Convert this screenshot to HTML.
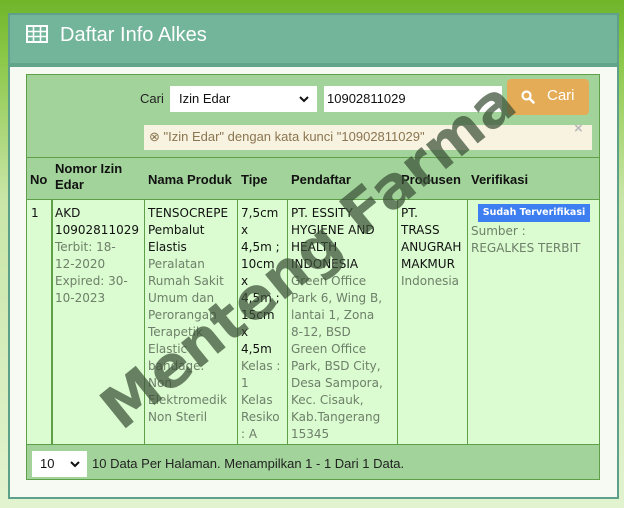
<!DOCTYPE html>
<html><head><meta charset="utf-8"><style>
*{margin:0;padding:0;box-sizing:border-box}
body{width:624px;height:508px;overflow:hidden;position:relative;font-family:"Liberation Sans",sans-serif;
background:linear-gradient(180deg,#6fb52a 0px,#8cc84a 60px,#c9e6a8 200px,#e2f3d0 508px);}
.a{position:absolute}
.panel{left:8px;top:13px;width:611px;height:486px;border:2px solid #5fa08a;background:#f6faf2}
.hdr{left:0;top:0;width:607px;height:52px;background:#72b59b;border-bottom:4px solid #62a58a}
.tbl{left:26px;top:74px;width:574px;height:406px;border:1px solid #5f9f48;background:#a2d39a}
.d{font-family:"DejaVu Sans",Verdana,sans-serif;font-size:12px;line-height:17px;color:#111}
.g{color:#6e7f6a}
.vl{position:absolute;top:124px;height:246px;border-left:1px solid #5f9f48}
</style></head><body>
<div class="a panel">
 <div class="a hdr">
  <svg class="a" style="left:16px;top:10px" width="22" height="18" viewBox="0 0 22 18"><rect x="1" y="1" width="20" height="16" fill="none" stroke="#fff" stroke-width="2"/><path d="M1 6.5H21M1 11.5H21M7.5 1V17M14.5 1V17" stroke="#fff" stroke-width="1.6"/></svg>
  <div class="a" style="left:50px;top:9px;font-size:20px;color:#fff">Daftar Info Alkes</div>
 </div>
</div>
<div class="a tbl">
 <div class="a" style="left:113px;top:16px;font-size:13px;color:#222">Cari</div>
 <div class="a" style="left:143px;top:11px;width:147px;height:26px;background:#fff;font-size:13px;padding:5px 9px;color:#111">Izin Edar<svg style="position:absolute;right:8px;top:10px" width="10" height="7" viewBox="0 0 10 7"><path d="M1 1L5 5L9 1" fill="none" stroke="#111" stroke-width="2"/></svg></div>
 <div class="a" style="left:297px;top:11px;width:178px;height:26px;background:#fff;font-size:13px;padding:5px 3px;color:#111">10902811029</div>
 <div class="a" style="left:480px;top:4px;width:82px;height:36px;background:#e4ac56;border-radius:4px;color:#fff;font-size:15px;padding:8px 0 0 40px">Cari<svg style="position:absolute;left:14px;top:11px" width="14" height="14" viewBox="0 0 14 14"><circle cx="5.5" cy="5.5" r="4" fill="none" stroke="#fff" stroke-width="2.2"/><path d="M8.5 8.5L12.5 12.5" stroke="#fff" stroke-width="2.6" stroke-linecap="round"/></svg></div>
 <div class="a" style="left:117px;top:50px;width:448px;height:25px;background:#f8f2e0;font-size:13px;color:#8a7650;padding:4px 5px">&#8855; "Izin Edar" dengan kata kunci "10902811029"</div>
 <div class="a" style="left:547px;top:45px;color:#bbb;font-size:15px;font-weight:bold">×</div>
 <div class="a" style="left:0;top:82px;width:572px;border-top:1px solid #5f9f48"></div>
 <div class="a" style="left:0;top:124px;width:572px;height:246px;background:#dafcd0;border-top:1px solid #5f9f48;border-bottom:1px solid #5f9f48"></div>
 <div class="a" style="left:24px;top:124px;height:246px;border-left:2px solid #5f9f48"></div>
 <div class="vl" style="left:117px"></div><div class="vl" style="left:210px"></div><div class="vl" style="left:260px"></div><div class="vl" style="left:370px"></div><div class="vl" style="left:440px"></div>
 <div class="a" style="font-size:13px;font-weight:bold;color:#111;top:86px;left:3px;line-height:16px">
  <div class="a" style="left:0;top:11px">No</div>
  <div class="a" style="left:25px;top:0;width:90px">Nomor Izin Edar</div>
  <div class="a" style="left:118px;top:11px;white-space:nowrap">Nama Produk</div>
  <div class="a" style="left:211px;top:11px">Tipe</div>
  <div class="a" style="left:261px;top:11px">Pendaftar</div>
  <div class="a" style="left:371px;top:11px">Produsen</div>
  <div class="a" style="left:441px;top:11px">Verifikasi</div>
 </div>
 <div class="a d" style="left:4px;top:130px">1</div>
 <div class="a d" style="left:28px;top:130px;width:90px">AKD<br>10902811029<br><span class="g">Terbit: 18-<br>12-2020<br>Expired: 30-<br>10-2023</span></div>
 <div class="a d" style="left:121px;top:130px;width:92px">TENSOCREPE<br>Pembalut<br>Elastis<br><span class="g">Peralatan<br>Rumah Sakit<br>Umum dan<br>Perorangan<br>Terapetik<br>Elastic<br>bandage.<br>Non<br>Elektromedik<br>Non Steril</span></div>
 <div class="a d" style="left:214px;top:130px;width:48px">7,5cm<br>x<br>4,5m ;<br>10cm<br>x<br>4,5m ;<br>15cm<br>x<br>4,5m<br><span class="g">Kelas :<br>1<br>Kelas<br>Resiko<br>: A</span></div>
 <div class="a d" style="left:264px;top:130px;width:108px">PT. ESSITY<br>HYGIENE AND<br>HEALTH<br>INDONESIA<br><span class="g">Green Office<br>Park 6, Wing B,<br>lantai 1, Zona<br>8-12, BSD<br>Green Office<br>Park, BSD City,<br>Desa Sampora,<br>Kec. Cisauk,<br>Kab.Tangerang<br>15345</span></div>
 <div class="a d" style="left:374px;top:130px;width:68px">PT.<br>TRASS<br>ANUGRAH<br>MAKMUR<br><span class="g">Indonesia</span></div>
 <div class="a" style="left:451px;top:129px;width:112px;height:18px;background:#3d7ef0;color:#fff;font-family:'DejaVu Sans',sans-serif;font-size:9.5px;font-weight:bold;text-align:center;line-height:18px">Sudah Terverifikasi</div>
 <div class="a d g" style="left:444px;top:148px">Sumber :<br>REGALKES TERBIT</div>
 <div class="a" style="left:5px;top:376px;width:55px;height:26px;background:#fff;font-size:13px;padding:5px 8px;color:#111">10<svg style="position:absolute;right:7px;top:10px" width="10" height="7" viewBox="0 0 10 7"><path d="M1 1L5 5L9 1" fill="none" stroke="#111" stroke-width="2"/></svg></div>
 <div class="a" style="left:65px;top:381px;font-size:13px;color:#222">10 Data Per Halaman. Menampilkan 1 - 1 Dari 1 Data.</div>
</div>
<div class="a" style="left:18px;top:225px;width:580px;text-align:center;transform:rotate(-39deg);font-family:'DejaVu Sans',sans-serif;font-weight:bold;font-size:58px;line-height:60px;color:rgba(60,80,55,0.72);white-space:nowrap">Menteng Farma</div>
</body></html>
